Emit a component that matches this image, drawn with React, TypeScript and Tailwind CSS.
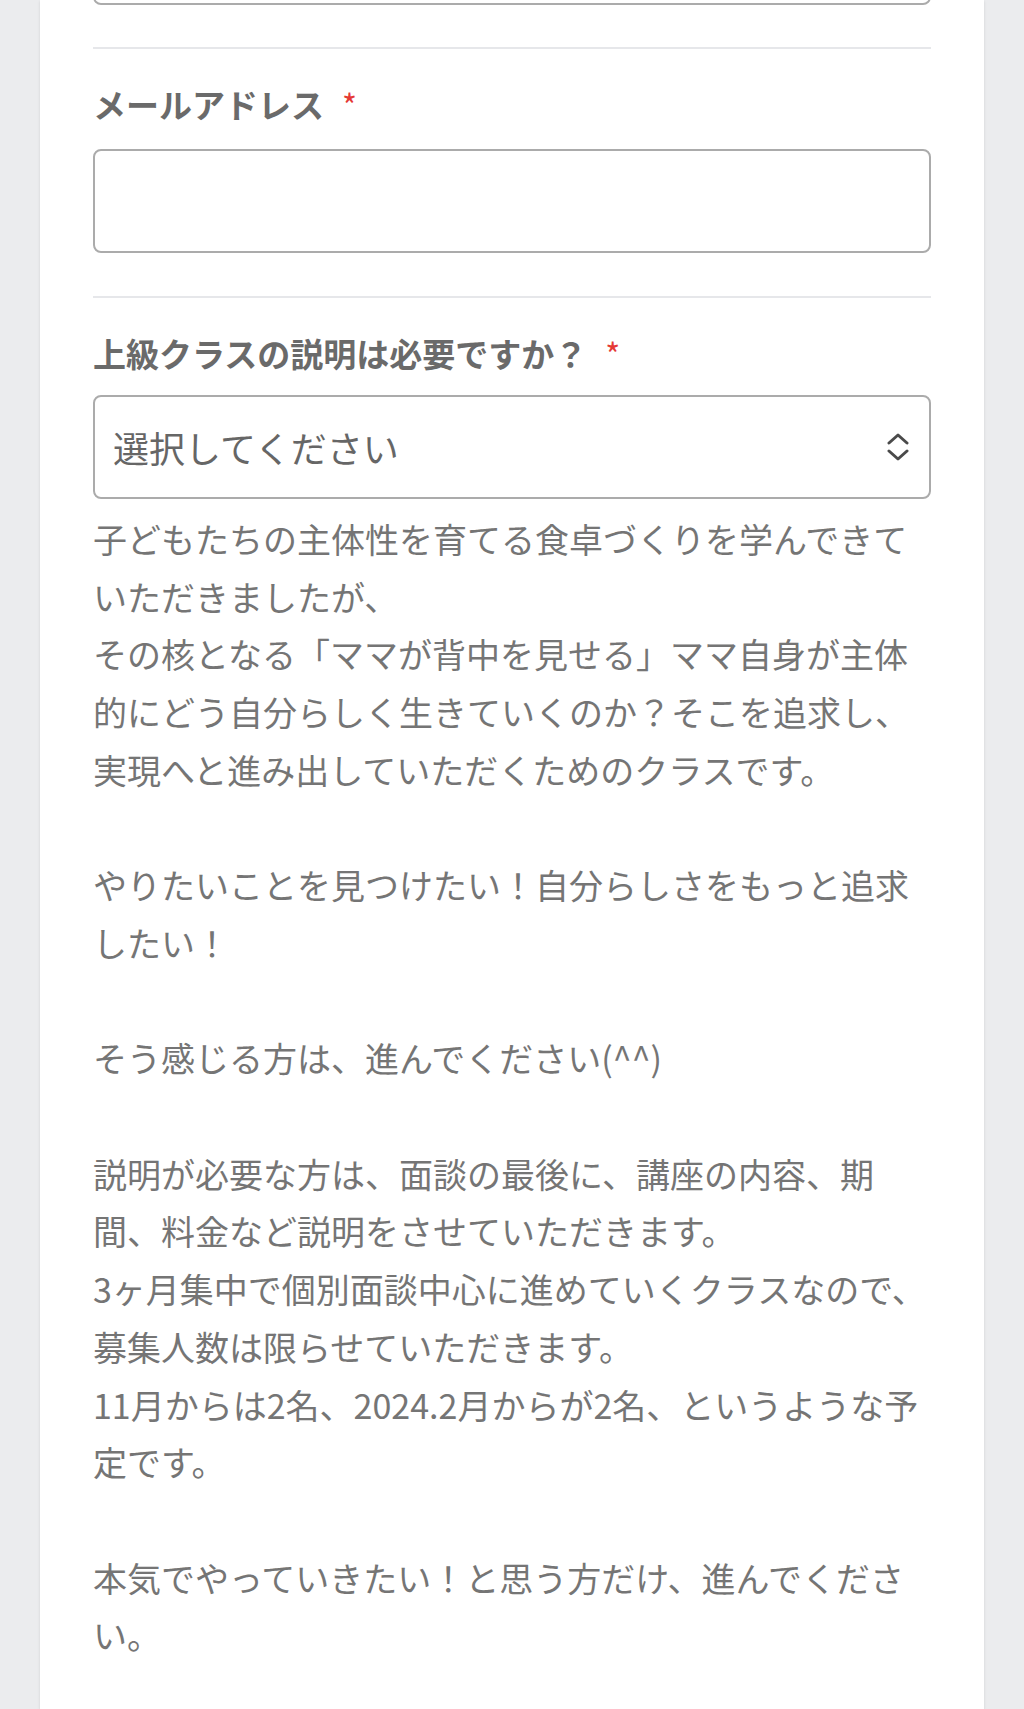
import { Fragment } from 'react';

const FONT = '"Noto Sans CJK JP", "Noto Sans", sans-serif';

const description = [
  '子どもたちの主体性を育てる食卓づくりを学んできていただきましたが、',
  'その核となる「ママが背中を見せる」ママ自身が主体的にどう自分らしく生きていくのか？そこを追求し、',
  '実現へと進み出していただくためのクラスです。',
  '',
  'やりたいことを見つけたい！自分らしさをもっと追求したい！',
  '',
  'そう感じる方は、進んでください(^^)',
  '',
  '説明が必要な方は、面談の最後に、講座の内容、期間、料金など説明をさせていただきます。',
  '3ヶ月集中で個別面談中心に進めていくクラスなので、',
  '募集人数は限らせていただきます。',
  '11月からは2名、2024.2月からが2名、というような予定です。',
  '',
  '本気でやっていきたい！と思う方だけ、進んでください。',
];

const FieldLabel = ({ children }: { children: string }) => (
  <label className="flex items-center gap-[18px] text-[33px] font-bold leading-[50px] text-[#6a6a6a]">
    {children}
    <span className="text-[32px] font-normal text-[#e53935]">*</span>
  </label>
);

const Divider = () => <hr className="border-t-2 border-[#e6e7ea]" />;

export default function App() {
  return (
    <div
      className="min-h-[1709px] bg-[#ebecee]"
      style={{ fontFamily: FONT }}
    >
      <div className="mx-10 flex min-h-[1709px] flex-col overflow-hidden bg-white px-[53px] shadow-sm">
        {/* bottom edge of the previous field */}
        <div className="-mt-[97px] h-[102px] rounded-lg border-2 border-[#ababab]" />

        <div className="mt-[42px]">
          <Divider />
        </div>

        <div className="mt-[30px] flex flex-col gap-[20px]">
          <FieldLabel>メールアドレス</FieldLabel>
          <input
            type="email"
            className="h-[104px] w-full rounded-lg border-2 border-[#ababab] px-5 text-[34px] text-[#555] outline-none"
          />
        </div>

        <div className="mt-[43px]">
          <Divider />
        </div>

        <div className="mt-[30px] flex flex-col gap-[17px]">
          <FieldLabel>上級クラスの説明は必要ですか？</FieldLabel>
          <div className="flex h-[104px] items-center justify-between rounded-lg border-2 border-[#ababab] pl-[18px] pr-[19px]">
            <span className="text-[36px] text-[#666]">選択してください</span>
            <svg
              width="24"
              height="28"
              viewBox="0 0 24 28"
              fill="none"
              stroke="#4a4a4a"
              strokeWidth="3"
              strokeLinecap="round"
              strokeLinejoin="round"
            >
              <path d="M3 10 L12 2 L21 10" />
              <path d="M3 18 L12 26 L21 18" />
            </svg>
          </div>
        </div>

        <p className="mt-[11px] text-[34px] leading-[57.7px] text-[#757575]">
          {description.map((line, i) => (
            <Fragment key={i}>
              {line}
              {i < description.length - 1 ? <br /> : null}
            </Fragment>
          ))}
        </p>
      </div>
    </div>
  );
}
